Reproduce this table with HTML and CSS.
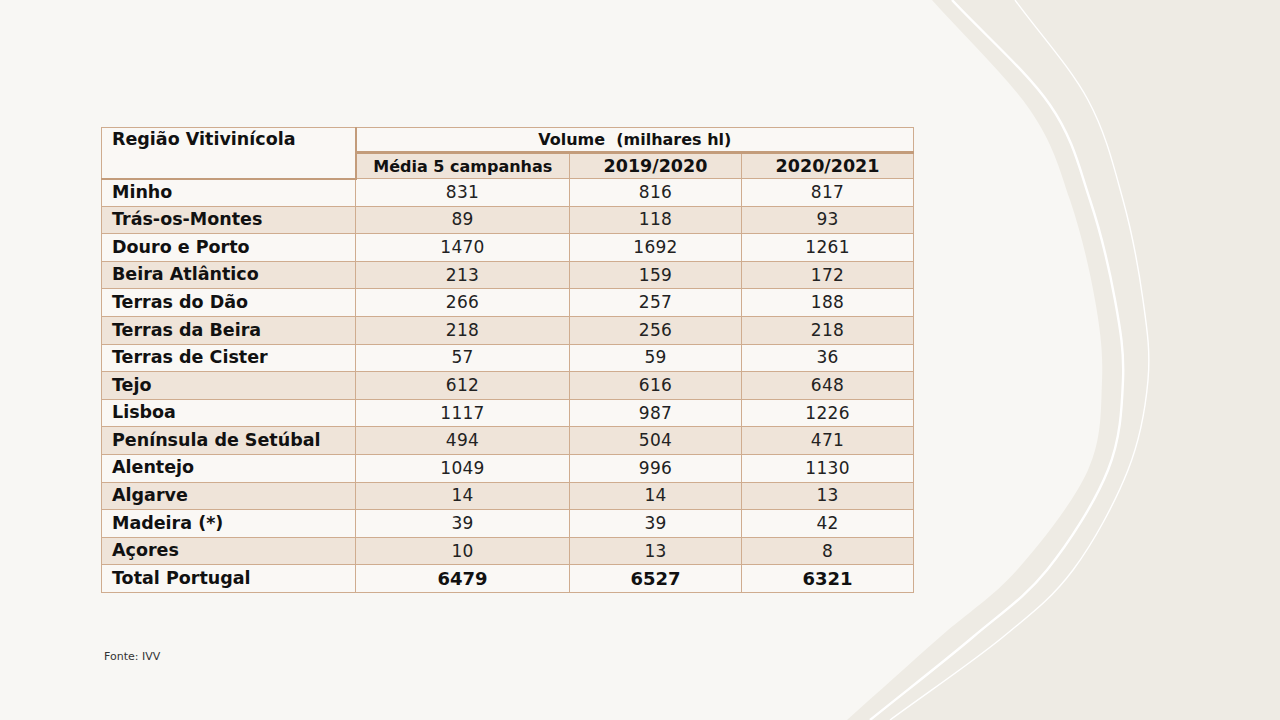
FILE: index.html
```html
<!DOCTYPE html>
<html lang="pt">
<head>
<meta charset="utf-8">
<title>Região Vitivinícola</title>
<link rel="stylesheet" href="styles.css">
</head>
<body>
<div class="slide">
  <svg class="backdrop" width="1280" height="720" viewBox="0 0 1280 720" aria-hidden="true">
    <rect x="0" y="0" width="1280" height="720" fill="#eeebe4"/>
    <path d="M932,0 C964.7,36.7 1007,76.7 1030,110 C1053,143.3 1059.2,168.3 1070,200 C1080.8,231.7 1089.7,269.8 1095,300 C1100.3,330.2 1103.2,352.7 1102,381 C1100.8,409.3 1102.2,438.5 1088,470 C1073.8,501.5 1041.7,542.2 1017,570 C992.3,597.8 968.3,612 940,637 C911.7,662 878,692.3 847,720 L0,720 L0,0 Z" fill="#f8f7f4"/>
    <path d="M952,0 C984.7,35 1027,71.7 1050,105 C1073,138.3 1079.2,167.5 1090,200 C1100.8,232.5 1109.5,270 1115,300 C1120.5,330 1124.2,351.7 1123,380 C1121.8,408.3 1120.7,438.3 1108,470 C1095.3,501.7 1069.5,542.2 1047,570 C1024.5,597.8 1002.5,612 973,637 C943.5,662 904.3,692.3 870,720" fill="none" stroke="#ffffff" stroke-width="2.4"/>
    <path d="M1015,0 C1039.3,33.3 1070,66.7 1088,100 C1106,133.3 1113.8,166.7 1123,200 C1132.2,233.3 1138.8,270 1143,300 C1147.2,330 1150.5,351.7 1148,380 C1145.5,408.3 1140.5,438.3 1128,470 C1115.5,501.7 1093.8,542.2 1073,570 C1052.2,597.8 1033.5,612 1003,637 C972.5,662 927.7,692.3 890,720" fill="none" stroke="#ffffff" stroke-width="1.4"/>
  </svg>

  <main class="content">
    <table class="wine">
      <colgroup>
        <col class="c-region">
        <col class="c-avg">
        <col class="c-year">
        <col class="c-year">
      </colgroup>
      <thead>
        <tr class="h1">
          <th rowspan="2" class="region-head">Região Vitivinícola</th>
          <th colspan="3" class="vol-head">Volume&nbsp; (milhares hl)</th>
        </tr>
        <tr class="h2">
          <th class="first">Média 5 campanhas</th>
          <th class="year">2019/2020</th>
          <th class="year">2020/2021</th>
        </tr>
      </thead>
      <tbody>
        <tr><th>Minho</th><td>831</td><td>816</td><td>817</td></tr>
        <tr class="alt"><th>Trás-os-Montes</th><td>89</td><td>118</td><td>93</td></tr>
        <tr><th>Douro e Porto</th><td>1470</td><td>1692</td><td>1261</td></tr>
        <tr class="alt"><th>Beira Atlântico</th><td>213</td><td>159</td><td>172</td></tr>
        <tr><th>Terras do Dão</th><td>266</td><td>257</td><td>188</td></tr>
        <tr class="alt"><th>Terras da Beira</th><td>218</td><td>256</td><td>218</td></tr>
        <tr><th>Terras de Cister</th><td>57</td><td>59</td><td>36</td></tr>
        <tr class="alt"><th>Tejo</th><td>612</td><td>616</td><td>648</td></tr>
        <tr><th>Lisboa</th><td>1117</td><td>987</td><td>1226</td></tr>
        <tr class="alt"><th>Península de Setúbal</th><td>494</td><td>504</td><td>471</td></tr>
        <tr><th>Alentejo</th><td>1049</td><td>996</td><td>1130</td></tr>
        <tr class="alt"><th>Algarve</th><td>14</td><td>14</td><td>13</td></tr>
        <tr><th>Madeira (*)</th><td>39</td><td>39</td><td>42</td></tr>
        <tr class="alt"><th>Açores</th><td>10</td><td>13</td><td>8</td></tr>
        <tr class="total"><th>Total Portugal</th><td>6479</td><td>6527</td><td>6321</td></tr>
      </tbody>
    </table>
    <p class="source">Fonte: IVV</p>
  </main>
</div>
</body>
</html>
```

FILE: styles.css
```css
html, body {
  margin: 0;
  padding: 0;
  background: #eeebe4;
}

.slide {
  position: relative;
  width: 1280px;
  height: 720px;
  overflow: hidden;
  font-family: "DejaVu Sans", Verdana, sans-serif;
  color: #111;
}

.backdrop {
  position: absolute;
  left: 0;
  top: 0;
  display: block;
}

.content {
  position: relative;
  padding: 127px 0 0 101px;
}

.wine {
  border-collapse: collapse;
  table-layout: fixed;
  width: 813px;
  background: #faf8f5;
}

.c-region { width: 254px; }
.c-avg { width: 214px; }
.c-year { width: 172px; }

.wine th,
.wine td {
  border: 1px solid #cfac8f;
  padding: 0;
  line-height: 1;
}

.wine thead th {
  font-weight: bold;
  font-size: 16px;
  text-align: center;
}

.wine thead th.year {
  font-size: 17.5px;
}

.wine .h1 {
  height: 25px;
}

.wine .h2 {
  height: 26px;
}

.wine .region-head {
  text-align: left;
  vertical-align: top;
  padding: 3px 0 0 10px;
  font-size: 17.5px;
  border-bottom: 2px solid #c39c7b;
  border-right: 2px solid #c39c7b;
}

.wine .vol-head {
  border-bottom: 3px solid #c39c7b;
  padding-top: 1px;
}

.wine .h2 th {
  background: #efe4d9;
  padding-top: 1px;
}

.wine tbody tr {
  height: 27.6px;
}

.wine tbody th {
  text-align: left;
  padding-left: 10px;
  font-weight: bold;
  font-size: 17.5px;
}

.wine tbody td {
  text-align: center;
  font-size: 17px;
  letter-spacing: 0.3px;
  color: #222;
}

.wine tbody tr.alt {
  background: #efe4d9;
}

.wine tr.total td {
  font-weight: bold;
  font-size: 18px;
  letter-spacing: 0;
  color: #111;
}

.source {
  margin: 57px 0 0 3px;
  font-size: 11px;
  color: #333;
}
```
